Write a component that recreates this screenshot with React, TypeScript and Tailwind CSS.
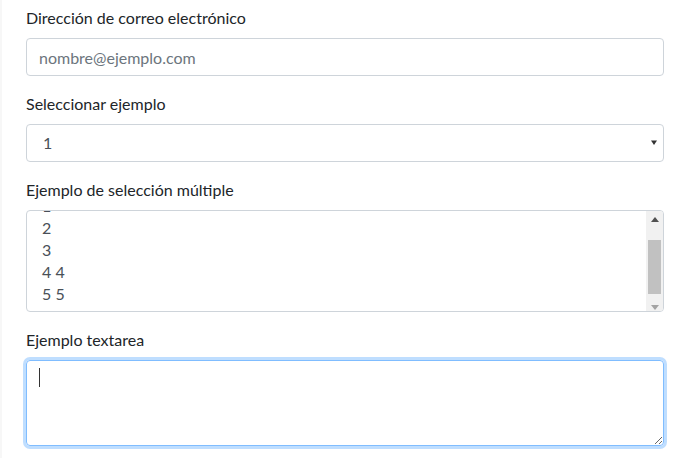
export default function App() {
  const options = ["1", "2", "3", "4 4", "5 5"]

  return (
    <div className="flex h-[458px] w-[686px] overflow-hidden bg-white font-['Lato',sans-serif] text-[16px] text-[#212529]">
      <div className="w-[2px] shrink-0 bg-[#f7f7f7]" />

      <form className="flex flex-1 flex-col pl-[24px] pr-[22px] pt-[6px]">
        {/* Email */}
        <div className="mb-4 flex flex-col">
          <label className="mb-2 leading-6">Dirección de correo electrónico</label>
          <input
            type="email"
            placeholder="nombre@ejemplo.com"
            className="h-[38px] w-full rounded-[4px] border border-[#ced4da] px-3 leading-6 text-[#495057] outline-none placeholder:text-[#6c757d]"
          />
        </div>

        {/* Select */}
        <div className="mb-4 flex flex-col">
          <label className="mb-2 leading-6">Seleccionar ejemplo</label>
          <div className="relative">
            <select className="h-[38px] w-full appearance-none rounded-[4px] border border-[#ced4da] bg-white pl-[16px] pr-8 leading-6 text-[#495057] outline-none">
              <option>1</option>
              <option>2</option>
              <option>3</option>
              <option>4</option>
              <option>5</option>
            </select>
            <svg className="pointer-events-none absolute right-[6px] top-[16px]" width="8" height="6" viewBox="0 0 8 6">
              <path d="M1 0.5h6L4 5z" fill="#333" />
            </svg>
          </div>
        </div>

        {/* Multiple select */}
        <div className="mb-4 flex flex-col">
          <label className="mb-2 leading-6">Ejemplo de selección múltiple</label>
          <div className="flex h-[102px] overflow-hidden rounded-[4px] border border-[#ced4da] text-[#495057]">
            <div className="flex-1 overflow-hidden pl-[15px]">
              <div className="-mt-[16px]">
                {options.map((o) => (
                  <div key={o} className="h-[22px] leading-[22px]">
                    {o}
                  </div>
                ))}
              </div>
            </div>
            <div className="flex w-[17px] flex-col items-center bg-[#f1f1f1]">
              <svg className="mt-[6px]" width="8" height="5" viewBox="0 0 8 5">
                <path d="M4 0L8 5H0z" fill="#505050" />
              </svg>
              <div className="mt-[18px] h-[54px] w-[13px] bg-[#c1c1c1]" />
              <svg className="mt-[11px]" width="8" height="5" viewBox="0 0 8 5">
                <path d="M0 0h8L4 5z" fill="#a3a3a3" />
              </svg>
            </div>
          </div>
        </div>

        {/* Textarea */}
        <div className="flex flex-col">
          <label className="mb-2 leading-6">Ejemplo textarea</label>
          <div className="relative">
            <textarea
              rows={3}
              readOnly
              className="block h-[86px] w-full rounded-[4px] border border-[#80bdff] px-3 py-1.5 leading-6 text-[#495057] shadow-[0_0_0_3px_rgba(0,123,255,0.25)] outline-none"
            />
            <span className="pointer-events-none absolute left-[13px] top-[8px] h-[19px] w-px bg-[#333]" />
          </div>
        </div>
      </form>
    </div>
  )
}
